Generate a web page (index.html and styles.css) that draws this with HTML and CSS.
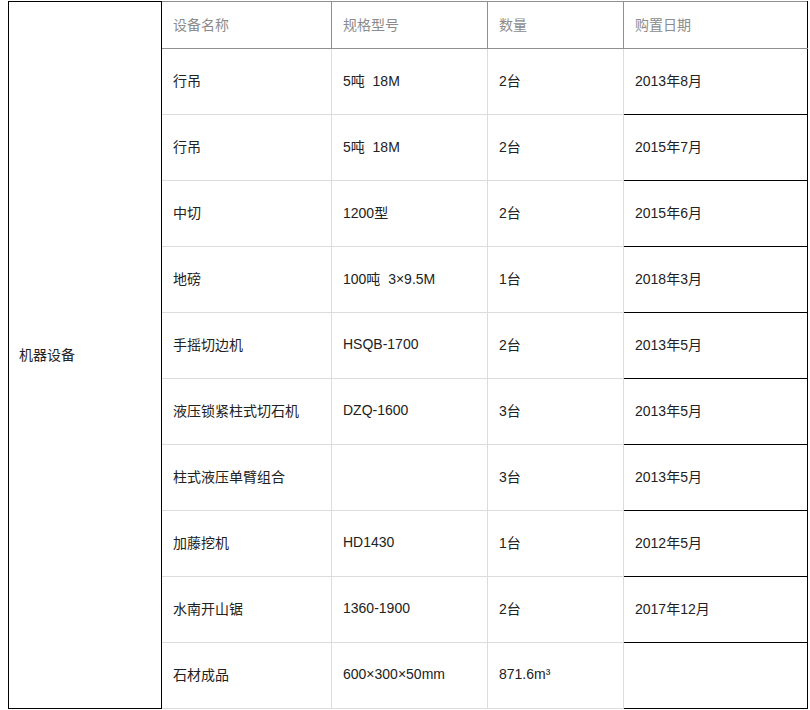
FILE: index.html
```html
<!DOCTYPE html>
<html lang="zh-CN">
<head>
<meta charset="utf-8">
<title>机器设备</title>
<link rel="stylesheet" href="styles.css">
</head>
<body>
<table class="equip">
  <colgroup>
    <col class="c-cat">
    <col class="c-name">
    <col class="c-spec">
    <col class="c-qty">
    <col class="c-date">
  </colgroup>
  <tbody>
    <tr class="head">
      <td class="cat" rowspan="11">机器设备</td>
      <th>设备名称</th>
      <th>规格型号</th>
      <th>数量</th>
      <th class="date">购置日期</th>
    </tr>
    <tr><td>行吊</td><td>5吨&nbsp;&nbsp;18M</td><td>2台</td><td class="date">2013年8月</td></tr>
    <tr><td>行吊</td><td>5吨&nbsp;&nbsp;18M</td><td>2台</td><td class="date">2015年7月</td></tr>
    <tr><td>中切</td><td>1200型</td><td>2台</td><td class="date">2015年6月</td></tr>
    <tr><td>地磅</td><td>100吨&nbsp;&nbsp;3×9.5M</td><td>1台</td><td class="date">2018年3月</td></tr>
    <tr><td>手摇切边机</td><td>HSQB-1700</td><td>2台</td><td class="date">2013年5月</td></tr>
    <tr><td>液压锁紧柱式切石机</td><td>DZQ-1600</td><td>3台</td><td class="date">2013年5月</td></tr>
    <tr><td>柱式液压单臂组合</td><td></td><td>3台</td><td class="date">2013年5月</td></tr>
    <tr><td>加藤挖机</td><td>HD1430</td><td>1台</td><td class="date">2012年5月</td></tr>
    <tr><td>水南开山锯</td><td>1360-1900</td><td>2台</td><td class="date">2017年12月</td></tr>
    <tr><td>石材成品</td><td>600×300×50mm</td><td>871.6m³</td><td class="date"></td></tr>
  </tbody>
</table>
</body>
</html>
```

FILE: styles.css
```css
html, body {
  margin: 0;
  background: #fff;
}

body {
  padding: 1px 0 0 8px;
  font-family: "Liberation Sans", Arial, "Noto Sans CJK SC", sans-serif;
  font-size: 14px;
  color: #222;
}

.equip {
  border-collapse: collapse;
  table-layout: fixed;
  width: 799px;
}

.c-cat { width: 153px; }
.c-name { width: 170px; }
.c-spec { width: 156px; }
.c-qty { width: 136px; }
.c-date { width: 184px; }

.equip td,
.equip th {
  border: 1px solid #dcdcdc;
  padding: 0 0 3px 11px;
  text-align: left;
  vertical-align: middle;
  font-weight: normal;
  white-space: nowrap;
}

.equip tr { height: 66px; }
.equip tr.head { height: 47px; }

.equip th {
  color: #8c8c8c;
  border-color: #8f8f8f;
}

.equip td.cat {
  border: 1px solid #000;
  padding-left: 10px;
}

.equip td.date,
.equip th.date {
  border: 1px solid #000;
}

.equip th.date {
  border-top-color: #8f8f8f;
  border-bottom-color: #8f8f8f;
}
```
